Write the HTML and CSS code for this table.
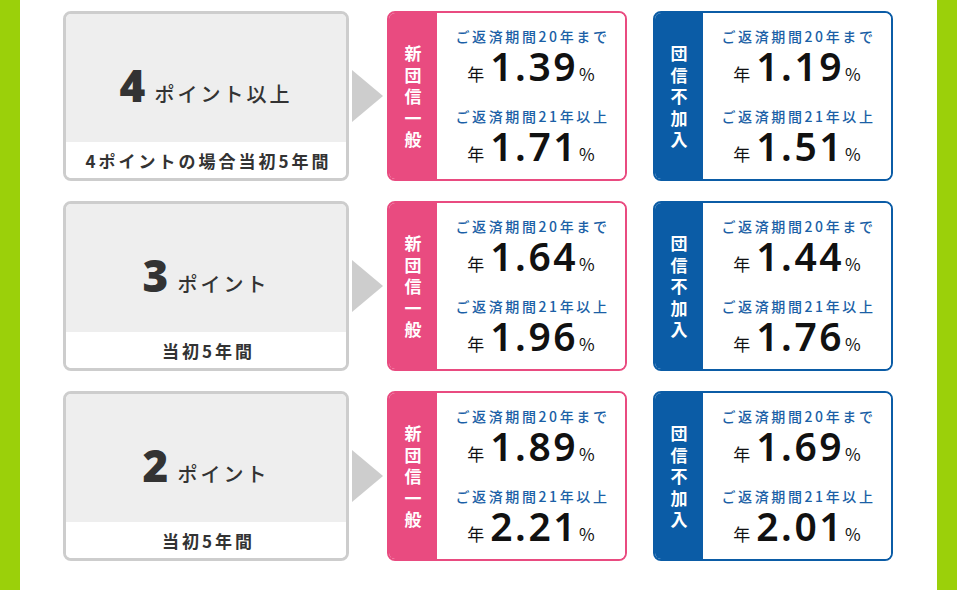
FILE: index.html
```html
<!DOCTYPE html>
<html lang="ja">
<head>
<meta charset="utf-8">
<title>金利表</title>
<link rel="stylesheet" href="styles.css">
</head>
<body>
<div class="page">
  <div class="side"></div>
  <div class="main">
    <div class="row">
      <div class="point-card">
        <div class="point-top"><span class="num">4</span><span class="unit">ポイント以上</span></div>
        <div class="point-bottom">4ポイントの場合当初5年間</div>
      </div>
      <div class="arrow"></div>
      <div class="rate-card pink">
        <div class="tag">新団信一般</div>
        <div class="rates">
          <div class="block">
            <div class="term">ご返済期間20年まで</div>
            <div class="rate"><span class="y">年</span><span class="val">1.39</span><span class="pct">%</span></div>
          </div>
          <div class="block">
            <div class="term">ご返済期間21年以上</div>
            <div class="rate"><span class="y">年</span><span class="val">1.71</span><span class="pct">%</span></div>
          </div>
        </div>
      </div>
      <div class="rate-card blue">
        <div class="tag">団信不加入</div>
        <div class="rates">
          <div class="block">
            <div class="term">ご返済期間20年まで</div>
            <div class="rate"><span class="y">年</span><span class="val">1.19</span><span class="pct">%</span></div>
          </div>
          <div class="block">
            <div class="term">ご返済期間21年以上</div>
            <div class="rate"><span class="y">年</span><span class="val">1.51</span><span class="pct">%</span></div>
          </div>
        </div>
      </div>
    </div>

    <div class="row">
      <div class="point-card">
        <div class="point-top"><span class="num">3</span><span class="unit">ポイント</span></div>
        <div class="point-bottom">当初5年間</div>
      </div>
      <div class="arrow"></div>
      <div class="rate-card pink">
        <div class="tag">新団信一般</div>
        <div class="rates">
          <div class="block">
            <div class="term">ご返済期間20年まで</div>
            <div class="rate"><span class="y">年</span><span class="val">1.64</span><span class="pct">%</span></div>
          </div>
          <div class="block">
            <div class="term">ご返済期間21年以上</div>
            <div class="rate"><span class="y">年</span><span class="val">1.96</span><span class="pct">%</span></div>
          </div>
        </div>
      </div>
      <div class="rate-card blue">
        <div class="tag">団信不加入</div>
        <div class="rates">
          <div class="block">
            <div class="term">ご返済期間20年まで</div>
            <div class="rate"><span class="y">年</span><span class="val">1.44</span><span class="pct">%</span></div>
          </div>
          <div class="block">
            <div class="term">ご返済期間21年以上</div>
            <div class="rate"><span class="y">年</span><span class="val">1.76</span><span class="pct">%</span></div>
          </div>
        </div>
      </div>
    </div>

    <div class="row">
      <div class="point-card">
        <div class="point-top"><span class="num">2</span><span class="unit">ポイント</span></div>
        <div class="point-bottom">当初5年間</div>
      </div>
      <div class="arrow"></div>
      <div class="rate-card pink">
        <div class="tag">新団信一般</div>
        <div class="rates">
          <div class="block">
            <div class="term">ご返済期間20年まで</div>
            <div class="rate"><span class="y">年</span><span class="val">1.89</span><span class="pct">%</span></div>
          </div>
          <div class="block">
            <div class="term">ご返済期間21年以上</div>
            <div class="rate"><span class="y">年</span><span class="val">2.21</span><span class="pct">%</span></div>
          </div>
        </div>
      </div>
      <div class="rate-card blue">
        <div class="tag">団信不加入</div>
        <div class="rates">
          <div class="block">
            <div class="term">ご返済期間20年まで</div>
            <div class="rate"><span class="y">年</span><span class="val">1.69</span><span class="pct">%</span></div>
          </div>
          <div class="block">
            <div class="term">ご返済期間21年以上</div>
            <div class="rate"><span class="y">年</span><span class="val">2.01</span><span class="pct">%</span></div>
          </div>
        </div>
      </div>
    </div>
  </div>
  <div class="side"></div>
</div>
</body>
</html>
```

FILE: styles.css
```css
* { box-sizing: border-box; }
html, body { margin: 0; padding: 0; }
body {
  font-family: "Noto Sans CJK JP", "Noto Sans", sans-serif;
  background: #fff;
}
.page {
  display: flex;
  width: 957px;
  height: 590px;
}
.side {
  width: 20px;
  background: #9bd00a;
  flex: none;
}
.main {
  flex: 1;
  background: #fff;
  padding: 11px 0 0 43px;
  display: flex;
  flex-direction: column;
  gap: 20px;
}
.row {
  display: flex;
  height: 170px;
  align-items: center;
}
.point-card {
  width: 286px;
  height: 170px;
  border: 3px solid #cdcdcd;
  border-radius: 8px;
  overflow: hidden;
  display: flex;
  flex-direction: column;
  color: #333;
}
.point-top {
  height: 128px;
  background: #eeeeee;
  text-align: center;
  padding-top: 51px;
  line-height: 40px;
}
.num {
  font-family: "Noto Sans", "Noto Sans CJK JP", sans-serif;
  font-size: 44px;
  font-weight: 900;
  line-height: 40px;
  margin-right: 9px;
}
.unit {
  font-size: 20px;
  font-weight: 500;
  letter-spacing: 3px;
  line-height: 20px;
}
.point-bottom {
  flex: 1;
  background: #fff;
  display: flex;
  align-items: center;
  justify-content: center;
  font-size: 17px;
  font-weight: 700;
  letter-spacing: 3px;
  padding-left: 5px;
}
.arrow {
  width: 0;
  height: 0;
  margin: 0 4px 0 3px;
  border-top: 26px solid transparent;
  border-bottom: 26px solid transparent;
  border-left: 31px solid #cdcdcd;
}
.rate-card {
  width: 240px;
  height: 170px;
  border: 2px solid;
  border-radius: 8px;
  overflow: hidden;
  display: flex;
}
.rate-card + .rate-card { margin-left: 26px; }
.pink { border-color: #e94b80; }
.blue { border-color: #0b5ca6; }
.tag {
  width: 48px;
  flex: none;
  display: flex;
  align-items: center;
  justify-content: center;
  color: #fff;
  font-size: 17px;
  font-weight: 700;
  line-height: 21.5px;
  text-align: center;
  padding: 0 15px;
  word-break: break-all;
}
.pink .tag { background: #e94b80; }
.blue .tag { background: #0b5ca6; }
.rates {
  flex: 1;
  background: #fff;
  padding-top: 13px;
  display: flex;
  flex-direction: column;
  gap: 20px;
}
.block {
  height: 60px;
}
.term {
  color: #1b5fa6;
  font-size: 14px;
  font-weight: 500;
  line-height: 20px;
  letter-spacing: 2.6px;
  text-align: center;
  padding-left: 3px;
}
.rate {
  height: 40px;
  line-height: 40px;
  text-align: center;
  color: #111;
  white-space: nowrap;
}
.y {
  font-size: 17px;
  font-weight: 400;
  line-height: 17px;
  margin-right: 6px;
}
.val {
  font-family: "Noto Sans", "Noto Sans CJK JP", sans-serif;
  font-size: 39px;
  font-weight: 600;
  letter-spacing: 2.5px;
  line-height: 40px;
}
.pct {
  font-size: 17px;
  font-weight: 400;
  line-height: 17px;
  margin-left: 1px;
}
```
